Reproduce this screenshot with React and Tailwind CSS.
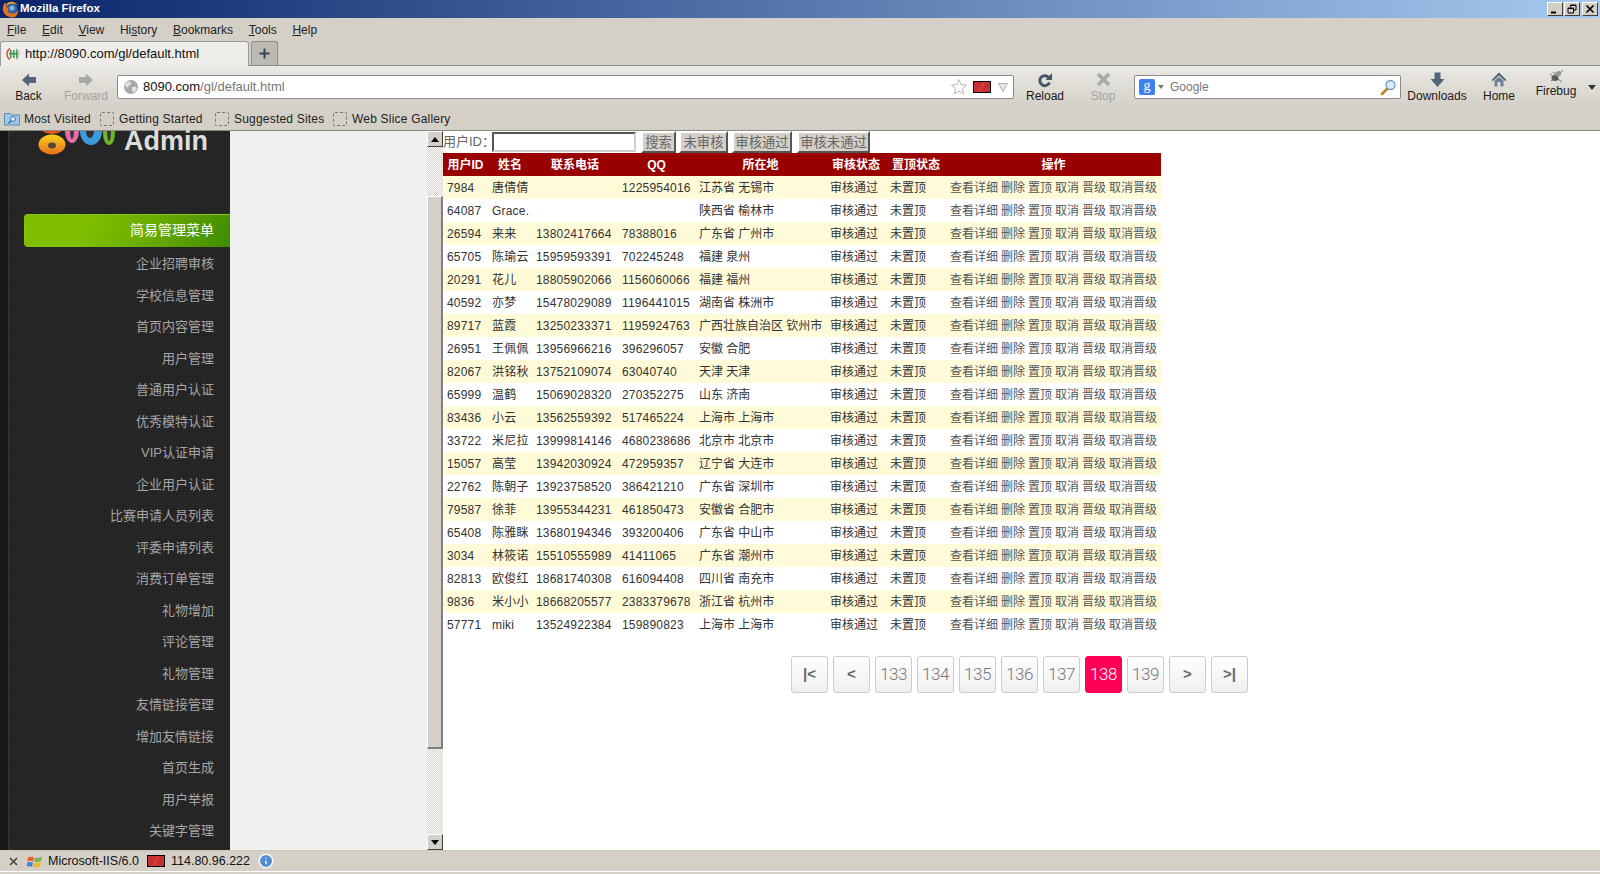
import React from "react";
import { Info } from "lucide-react";

const menus = [
  ["", "F", "ile"],
  ["", "E", "dit"],
  ["", "V", "iew"],
  ["Hi", "s", "tory"],
  ["", "B", "ookmarks"],
  ["", "T", "ools"],
  ["", "H", "elp"],
];

const sideItems = [
  "企业招聘审核",
  "学校信息管理",
  "首页内容管理",
  "用户管理",
  "普通用户认证",
  "优秀模特认证",
  "VIP认证申请",
  "企业用户认证",
  "比赛申请人员列表",
  "评委申请列表",
  "消费订单管理",
  "礼物增加",
  "评论管理",
  "礼物管理",
  "友情链接管理",
  "增加友情链接",
  "首页生成",
  "用户举报",
  "关键字管理",
];

const rows = [
  ["7984", "唐倩倩", "", "1225954016", "江苏省 无锡市"],
  ["64087", "Grace.", "", "", "陕西省 榆林市"],
  ["26594", "来来", "13802417664", "78388016", "广东省 广州市"],
  ["65705", "陈瑜云", "15959593391", "702245248", "福建 泉州"],
  ["20291", "花儿", "18805902066", "1156060066", "福建 福州"],
  ["40592", "亦梦", "15478029089", "1196441015", "湖南省 株洲市"],
  ["89717", "蓝霞", "13250233371", "1195924763", "广西壮族自治区 钦州市"],
  ["26951", "王佩佩", "13956966216", "396296057", "安徽 合肥"],
  ["82067", "洪铭秋", "13752109074", "63040740", "天津 天津"],
  ["65999", "温鹤", "15069028320", "270352275", "山东 济南"],
  ["83436", "小云", "13562559392", "517465224", "上海市 上海市"],
  ["33722", "米尼拉", "13999814146", "4680238686", "北京市 北京市"],
  ["15057", "高莹", "13942030924", "472959357", "辽宁省 大连市"],
  ["22762", "陈朝子", "13923758520", "386421210", "广东省 深圳市"],
  ["79587", "徐菲", "13955344231", "461850473", "安徽省 合肥市"],
  ["65408", "陈雅眯", "13680194346", "393200406", "广东省 中山市"],
  ["3034", "林筱诺", "15510555989", "41411065", "广东省 潮州市"],
  ["82813", "欧俊红", "18681740308", "616094408", "四川省 南充市"],
  ["9836", "米小小", "18668205577", "2383379678", "浙江省 杭州市"],
  ["57771", "miki", "13524922384", "159890823", "上海市 上海市"],
];

const pages = ["|<", "<", "133", "134", "135", "136", "137", "138", "139", ">", ">|"];

/* ---------- icons ---------- */
const FirefoxIcon = () => (
  <svg width="17" height="17" viewBox="0 0 17 17">
    <circle cx="9" cy="8.5" r="6.5" fill="#35609e" />
    <circle cx="10" cy="7" r="2.6" fill="#7fb0de" />
    <path d="M3 1.5 C0.5 5 0 9 2 12 C4 16 10 17.5 13.5 15.5 C15.5 14 16.5 11 16.5 8.5 C15 12 12 13 9 12.5 C6 12 5 9 6.5 7 C4.5 7 4 5 5 3 C4 3 3.5 2.8 3 1.5Z" fill="#e8701a" />
    <path d="M4.5 3 C6 1 8.5 0.5 11 1 C14 1.5 15.5 3.5 16 5 C14 3 12 2.5 10.5 3 C8.5 2.5 6.5 3 5.5 4.5Z" fill="#f0a030" />
  </svg>
);

const WinButton = ({ type }) => (
  <div className="w-4 h-[14px] bg-[#d4d0c8] border border-t-white border-l-white border-r-[#404040] border-b-[#404040] flex items-center justify-center">
    <svg width="10" height="10" viewBox="0 0 10 10" fill="none" stroke="#000">
      {type === "min" && <path d="M1 8.5H6" strokeWidth="2" />}
      {type === "max" && <path d="M3.5 3V1H9V6H7M1 4H6.5V9H1ZM1 4.5H6.5M3.5 1.5H9" strokeWidth="1" />}
      {type === "close" && <path d="M1.5 1.5L8.5 8.5M8.5 1.5L1.5 8.5" strokeWidth="1.7" />}
    </svg>
  </div>
);

const Favicon = () => (
  <svg width="16" height="16" viewBox="0 0 16 16">
    <path d="M5 2.5 A6.5 6.5 0 0 0 5 13.5" fill="none" stroke="#d9534f" strokeWidth="1.5" />
    <path d="M11 2.5 A6.5 6.5 0 0 1 11 13.5" fill="none" stroke="#c9c9c9" strokeWidth="1.5" />
    <rect x="5" y="4" width="1.6" height="8" fill="#3a9a4a" />
    <rect x="8" y="4" width="1.6" height="8" fill="#3a9a4a" />
    <rect x="11" y="4" width="1.4" height="8" fill="#3a9a4a" />
    <rect x="4" y="7" width="9" height="1.4" fill="#3a9a4a" />
  </svg>
);

const BackIcon = ({ color, flip }) => (
  <svg width="16" height="14" viewBox="0 0 16 14" className={flip ? "-scale-x-100" : ""}>
    <path d="M1 7L8 0.5V4H15V10H8V13.5Z" fill={color} />
  </svg>
);

const ReloadIcon = () => (
  <svg width="16" height="16" viewBox="0 0 16 16">
    <path d="M11.5 5.2 A5 5 0 1 0 12.5 10.5" fill="none" stroke="#445668" strokeWidth="3" />
    <path d="M15 1V8H8.5Z" fill="#445668" />
  </svg>
);

const StopIcon = () => (
  <svg width="15" height="15" viewBox="0 0 15 15">
    <path d="M2 2L13 13M13 2L2 13" stroke="#a9a9a6" strokeWidth="3.6" />
  </svg>
);

const DownIcon = () => (
  <svg width="15" height="16" viewBox="0 0 15 16">
    <path d="M4.5 0.5H10.5V7H14.5L7.5 15L0.5 7H4.5Z" fill="#52657a" />
  </svg>
);

const HomeIcon = () => (
  <svg width="16" height="15" viewBox="0 0 16 15">
    <path d="M8 0.5L15.5 8L14 9L8 3.5L2 9L0.5 8Z" fill="#52657a" />
    <path d="M3.5 8.5L8 4.8L12.5 8.5V14.5H9.5V10H6.5V14.5H3.5Z" fill="#6d8296" />
  </svg>
);

const FirebugIcon = () => (
  <svg width="18" height="14" viewBox="0 0 18 14" fill="none">
    <ellipse cx="8" cy="9" rx="3.5" ry="3" fill="#555" />
    <ellipse cx="11" cy="5" rx="3" ry="2.4" fill="#999" />
    <path d="M3 5L7 8M4 12L7 10M11 10L15 13M13 2L11 4M16 1L13 4M6 3L9 6" stroke="#777" strokeWidth="1" />
  </svg>
);

const RedFlag = () => (
  <div className="w-[18px] h-3 border border-black bg-[linear-gradient(115deg,#c8302f_45%,#e05050_50%,#c8302f_55%)]" />
);

const GlobeIcon = () => (
  <svg width="16" height="16" viewBox="0 0 16 16">
    <circle cx="8" cy="8" r="7" fill="#a8a8a8" />
    <path d="M4 3C6 2.5 8 3 8.5 4.5C8 6 6 6 5.5 7.5C5 9 3 8.5 2.2 7C2.2 5.5 3 4 4 3ZM9.5 8C11.5 7.5 13.5 8 14 9C13.5 11.5 11.5 13.5 10 13.8C9 12 8.5 9.5 9.5 8Z" fill="#e2e2e2" />
  </svg>
);

const MagnifierIcon = () => (
  <svg width="17" height="17" viewBox="0 0 17 17">
    <path d="M8 9L2 15" stroke="#c8812a" strokeWidth="2.6" strokeLinecap="round" />
    <circle cx="10.5" cy="6" r="4.5" fill="#d6ecfa" stroke="#6d9fc4" strokeWidth="1.3" />
  </svg>
);

const FolderIcon = () => (
  <svg width="16" height="15" viewBox="0 0 16 15">
    <path d="M0.5 2.5H6L7.5 4H15.5V14H0.5Z" fill="#9cc7ea" stroke="#5a8bb5" />
    <circle cx="9" cy="8" r="2.4" fill="#e6f3fc" stroke="#3d6f9c" />
    <path d="M7.2 9.8L4.5 12.5" stroke="#3d6f9c" strokeWidth="1.5" />
  </svg>
);

const WindowsFlag = () => (
  <svg width="16" height="15" viewBox="0 0 16 15">
    <path d="M1 3.5C3 2.5 5 2.5 7 3.5L6.2 7.5C4.2 6.6 2.2 6.6 0.2 7.5Z" fill="#e8602c" />
    <path d="M8 3.5C10 4.5 12.5 4 15 2.5L14.2 6.8C12 8.2 9.6 8.4 7.2 7.5Z" fill="#7cb342" />
    <path d="M0 8.5C2 7.7 4 7.7 6 8.5L5.2 12.8C3.2 12 1.2 12 -0.6 12.8Z" fill="#3f83d6" />
    <path d="M7 8.5C9.4 9.4 11.8 9.2 14 7.8L13.2 12.2C11 13.6 8.6 13.8 6.2 12.8Z" fill="#f5b82e" />
  </svg>
);

const LogoRings = () => (
  <svg width="78" height="26" viewBox="0 0 78 26" className="shrink-0">
    <defs>
      <linearGradient id="ringOrange" x1="0" y1="0" x2="0" y2="1">
        <stop offset="0" stopColor="#fbd21e" />
        <stop offset="1" stopColor="#e8701a" />
      </linearGradient>
    </defs>
    <ellipse cx="14" cy="-2" rx="10" ry="5" fill="#e8541e" />
    <ellipse cx="14" cy="13.5" rx="13.5" ry="10" fill="url(#ringOrange)" />
    <ellipse cx="14" cy="14.5" rx="4" ry="3" fill="#54483c" />
    <ellipse cx="34" cy="0" rx="7" ry="12" fill="#e86aa6" />
    <ellipse cx="34" cy="0" rx="2" ry="8" fill="#3a3a3a" />
    <ellipse cx="53" cy="0" rx="11" ry="14" fill="#3a9bdc" />
    <ellipse cx="52" cy="0" rx="4" ry="7" fill="#303030" />
    <ellipse cx="71" cy="2" rx="6" ry="12" fill="#6cb52d" />
    <ellipse cx="71" cy="2" rx="1.8" ry="8" fill="#303030" />
  </svg>
);

/* ---------- browser chrome ---------- */
const NavButton = ({ icon, label, width, disabled }) => (
  <div className={`${width} flex flex-col items-center shrink-0`}>
    <div className="h-[19px] flex items-center justify-center">{icon}</div>
    <span className={`text-xs leading-[15px] whitespace-nowrap ${disabled ? "text-[#a3a3a0]" : "text-[#1a1a1a]"}`}>
      {label}
    </span>
  </div>
);

const Bookmark = ({ label, width }) => (
  <div className={`${width} shrink-0 flex items-center gap-[5px]`}>
    <div className="w-[14px] h-[14px] rounded-[2px] border border-dashed border-[#777]" />
    <span className="text-xs text-[#222] tracking-[0.2px] whitespace-nowrap">{label}</span>
  </div>
);

const BrowserChrome = () => (
  <div className="shrink-0">
    {/* title bar */}
    <div className="h-[18px] bg-[linear-gradient(90deg,#0a246a,#a6caf0)] flex items-center pl-[2px] pr-[2px]">
      <FirefoxIcon />
      <span className="ml-px text-[11.5px] font-bold text-white">Mozilla Firefox</span>
      <div className="ml-auto flex items-center">
        <WinButton type="min" />
        <div className="ml-[1px]"><WinButton type="max" /></div>
        <div className="ml-[2px]"><WinButton type="close" /></div>
      </div>
    </div>

    {/* menu bar */}
    <div className="h-[23px] bg-[#d4d0c8] flex items-center gap-[15.7px] pl-[7px] text-xs text-[#222]">
      {menus.map(([a, u, b]) => (
        <span key={u + b}>
          {a}
          <span className="underline">{u}</span>
          {b}
        </span>
      ))}
    </div>

    {/* tabs */}
    <div className="h-[25px] bg-[#d4d0c8] flex items-end border-b border-[#8c8a86]">
      <div className="w-[249px] h-[25px] -mb-px rounded-t-[3px] border border-b-0 border-[#999] bg-[#eeedea] flex items-center pl-1 gap-1 text-[13px] text-[#111] z-10">
        <Favicon />
        <span>http://8090.com/gl/default.html</span>
      </div>
      <div className="ml-[2px] w-[27px] h-[24px] rounded-t-[3px] border border-b-0 border-[#8d8d8a] bg-[#bdbab3] flex items-center justify-center">
        <svg width="11" height="11" viewBox="0 0 11 11">
          <path d="M5.5 0.5V10.5M0.5 5.5H10.5" stroke="#33475c" strokeWidth="2" />
        </svg>
      </div>
    </div>

    {/* nav bar */}
    <div className="h-[41px] bg-[linear-gradient(#ebe9e5,#d4d0c8)] flex items-start pt-[4px]">
      <NavButton icon={<BackIcon color="#52657a" />} label="Back" width="w-[57px]" />
      <NavButton icon={<BackIcon color="#a8a8a6" flip />} label="Forward" width="w-[58px]" disabled />
      <div className="ml-[2px] w-[897px] h-[24px] mt-[5px] rounded-[2px] border border-[#8a8a8a] bg-white flex items-center pl-[5px] pr-[3px] shrink-0">
        <GlobeIcon />
        <span className="ml-[4px] text-[13px]">
          <span className="text-[#111]">8090.com</span>
          <span className="text-[#777]">/gl/default.html</span>
        </span>
        <svg width="18" height="18" viewBox="0 0 18 18" className="ml-auto">
          <path d="M9 1.5L11.2 6.6L16.6 7.1L12.5 10.7L13.8 16L9 13.2L4.2 16L5.5 10.7L1.4 7.1L6.8 6.6Z" fill="#fafafa" stroke="#b9b9b9" />
        </svg>
        <div className="ml-[5px]"><RedFlag /></div>
        <svg width="10" height="9" viewBox="0 0 10 9" className="ml-[7px] mr-[2px]">
          <path d="M0.5 0.5H9.5L5 8.5Z" fill="#e4e6e8" stroke="#aab0b6" />
        </svg>
      </div>
      <NavButton icon={<ReloadIcon />} label="Reload" width="w-[60px] ml-[1px]" />
      <NavButton icon={<StopIcon />} label="Stop" width="w-[56px]" disabled />
      <div className="ml-[3px] w-[267px] h-[24px] mt-[5px] rounded-[2px] border border-[#8a8a8a] bg-white flex items-center pl-[4px] pr-[3px] shrink-0">
        <div className="w-4 h-4 rounded-[2px] bg-[#3f7ff0] text-white text-[14px] leading-[14px] text-center [font-family:'Liberation_Serif',serif]">g</div>
        <svg width="6" height="4" viewBox="0 0 6 4" className="ml-[3px]">
          <path d="M0 0H6L3 4Z" fill="#777" />
        </svg>
        <span className="ml-[6px] text-xs text-[#777]">Google</span>
        <div className="ml-auto"><MagnifierIcon /></div>
      </div>
      <NavButton icon={<DownIcon />} label="Downloads" width="w-[68px] ml-[2px]" />
      <NavButton icon={<HomeIcon />} label="Home" width="w-[56px]" />
      <div className="w-[58px] flex flex-col items-center shrink-0 -mt-px">
        <FirebugIcon />
        <span className="text-xs leading-[15px] mt-px text-[#1a1a1a]">Firebug</span>
      </div>
      <svg width="8" height="5" viewBox="0 0 8 5" className="ml-[3px] mt-[15px]">
        <path d="M0 0H8L4 5Z" fill="#333" />
      </svg>
    </div>

    {/* bookmarks bar */}
    <div className="h-[24px] bg-[#d4d0c8] border-b border-[#8c8a86] flex items-center pl-[4px]">
      <FolderIcon />
      <span className="ml-[4px] w-[76px] shrink-0 text-xs text-[#222] tracking-[0.15px] whitespace-nowrap">Most Visited</span>
      <Bookmark label="Getting Started" width="w-[115px]" />
      <Bookmark label="Suggested Sites" width="w-[118px]" />
      <Bookmark label="Web Slice Gallery" width="w-[120px]" />
    </div>
  </div>
);

/* ---------- sidebar ---------- */
const Sidebar = () => (
  <div className="w-[230px] shrink-0 flex bg-[#222222]">
    <div className="w-2 shrink-0 bg-[#181818] border-r border-[#3a3a3a] box-content" />
    <div className="flex-1 min-w-0 bg-[#242424] bg-[radial-gradient(#303030_0.6px,transparent_0.7px)] bg-[length:3px_3px]">
      <div className="h-[26px] flex items-start pl-[29px]">
        <LogoRings />
        <span className="ml-2 text-[27px] leading-[20px] font-bold text-[#dddddd]">Admin</span>
      </div>
      <div className="mt-[57px] ml-[15px] h-[33px] pb-[2px] rounded-l-[4px] border-t border-l border-[#8cc20e] bg-[linear-gradient(110deg,#7fbf00_30%,#66a800_65%,#3d8c00)] flex items-center justify-end pr-4 text-sm text-white">
        简易管理菜单
      </div>
      <div className="mt-px">
        {sideItems.map((item) => (
          <div key={item} className="h-[31.5px] flex items-center justify-end pr-4 text-[13px] text-[#a6a6a6]">
            {item}
          </div>
        ))}
      </div>
    </div>
  </div>
);

const ScrollArrow = ({ up }) => (
  <div className="h-4 bg-[#d4d0c8] border border-t-white border-l-white border-r-[#404040] border-b-[#404040] flex items-center justify-center">
    <svg width="8" height="5" viewBox="0 0 8 5">
      <path d={up ? "M4 0L8 5H0Z" : "M0 0H8L4 5Z"} fill="#000" />
    </svg>
  </div>
);

const Scrollbar = () => (
  <div className="w-4 shrink-0 flex flex-col bg-[repeating-conic-gradient(#d4d0c8_0_25%,#ffffff_0_50%)] bg-[length:2px_2px]">
    <ScrollArrow up />
    <div className="h-[49px]" />
    <div className="h-[553px] bg-[#d4d0c8] border-t border-l border-white border-r-2 border-b-2 border-r-[#808080] border-b-[#808080]" />
    <div className="flex-1" />
    <ScrollArrow />
  </div>
);

const ActionButton = ({ label, extra }) => (
  <button className={`h-[22px] px-0 text-[13.33px] text-[#666] bg-[#d4d0c8] border-2 border-t-white border-l-white border-r-[#555] border-b-[#555] whitespace-nowrap ${extra}`}>
    {label}
  </button>
);

const UserTable = () => (
  <table className="w-[718px] table-fixed border-collapse text-xs">
    <colgroup>
      <col className="w-[45px]" />
      <col className="w-[44px]" />
      <col className="w-[86px]" />
      <col className="w-[77px]" />
      <col className="w-[131px]" />
      <col className="w-[60px]" />
      <col className="w-[60px]" />
      <col className="w-[215px]" />
    </colgroup>
    <thead>
      <tr className="h-[23px] bg-[#990000] text-white font-bold">
        {["用户ID", "姓名", "联系电话", "QQ", "所在地", "审核状态", "置顶状态", "操作"].map((h) => (
          <th key={h} className="p-0 text-center font-bold">{h}</th>
        ))}
      </tr>
    </thead>
    <tbody className="text-[#333] tracking-[0.2px]">
      {rows.map((r, i) => (
        <tr key={r[0]} className={`h-[23px] ${i % 2 === 0 ? "bg-[#fffbd9]" : "bg-white"}`}>
          <td className="p-0 pl-1 whitespace-nowrap">{r[0]}</td>
          <td className="p-0 pl-1 whitespace-nowrap">{r[1]}</td>
          <td className="p-0 pl-1 whitespace-nowrap">{r[2]}</td>
          <td className="p-0 pl-1 whitespace-nowrap">{r[3]}</td>
          <td className="p-0 pl-1 whitespace-nowrap tracking-normal">{r[4]}</td>
          <td className="p-0 pl-1 whitespace-nowrap tracking-normal">审核通过</td>
          <td className="p-0 pl-1 whitespace-nowrap tracking-normal">未置顶</td>
          <td className="p-0 pl-1 whitespace-nowrap tracking-normal text-[#555]">
            <div className="flex gap-[3px]">
              <span>查看详细</span>
              <span>删除</span>
              <span>置顶</span>
              <span>取消</span>
              <span>晋级</span>
              <span>取消晋级</span>
            </div>
          </td>
        </tr>
      ))}
    </tbody>
  </table>
);

const Pagination = () => (
  <div className="mt-5 ml-[348px] flex gap-[5px]">
    {pages.map((p) => (
      <div
        key={p}
        className={`w-[37px] h-[37px] rounded-[3px] border flex items-center justify-center ${
          p === "138"
            ? "bg-[#ff0058] border-[#ff0058] text-white text-[17px] font-light tracking-[-0.5px] [font-family:Roboto,sans-serif]"
            : p.length === 3
            ? "bg-[linear-gradient(#ffffff,#efefef)] border-[#cccccc] text-[#777] text-[17px] font-light tracking-[-0.5px] [font-family:Roboto,sans-serif]"
            : "bg-[linear-gradient(#ffffff,#efefef)] border-[#cccccc] text-[#666] text-[15px] font-bold"
        }`}
      >
        {p}
      </div>
    ))}
  </div>
);

const StatusBar = () => (
  <div className="h-[24px] shrink-0 bg-[#d4d0c8] border-t border-[#c8c5bd] flex flex-col">
    <div className="flex-1 flex items-center text-[12.5px] text-[#111]">
      <svg width="9" height="9" viewBox="0 0 9 9" className="ml-[9px]">
        <path d="M1 1L8 8M8 1L1 8" stroke="#444" strokeWidth="1.6" />
      </svg>
      <div className="ml-[9px]"><WindowsFlag /></div>
      <span className="ml-[5px]">Microsoft-IIS/6.0</span>
      <div className="ml-2"><RedFlag /></div>
      <span className="ml-[6px]">114.80.96.222</span>
      <Info size={16} className="ml-[8px] text-white fill-[#4f8ed0]" strokeWidth={2} />
    </div>
    <div className="h-px bg-white mb-[2px]" />
  </div>
);

export default function App() {
  return (
    <div className="w-[1600px] h-[874px] flex flex-col overflow-hidden bg-white [font-family:'Liberation_Sans','Noto_Sans_CJK_SC',sans-serif]">
      <BrowserChrome />
      <div className="flex flex-1 min-h-0">
        <Sidebar />
        <div className="w-[197px] shrink-0 bg-[#f0f0f0]" />
        <Scrollbar />
        <div className="flex-1 min-w-0 bg-white">
          <div className="h-[22px] flex items-center">
            <span className="w-[49px] shrink-0 text-[13px] text-[#666] whitespace-nowrap">用户ID：</span>
            <input className="w-[144px] h-[20px] bg-white border-2 border-t-[#555] border-l-[#555] border-r-[#d4d0c8] border-b-[#d4d0c8]" />
            <div className="ml-[5px] flex gap-[3px]">
              <ActionButton label="搜索" extra="w-[35px]" />
              <ActionButton label="未审核" extra="w-[49px]" />
              <ActionButton label="审核通过" extra="w-[60px] ml-px" />
              <ActionButton label="审核未通过" extra="w-[73px] ml-[2px]" />
            </div>
          </div>
          <UserTable />
          <Pagination />
        </div>
      </div>
      <StatusBar />
    </div>
  );
}
